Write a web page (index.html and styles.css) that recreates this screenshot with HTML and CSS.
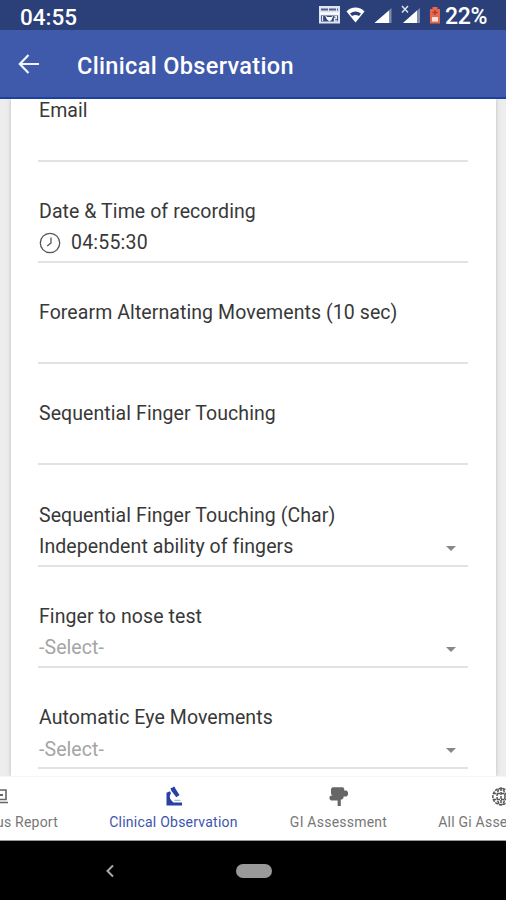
FILE: index.html
```html
<!DOCTYPE html>
<html lang="en">
<head>
<meta charset="utf-8">
<meta name="viewport" content="width=device-width">
<title>Clinical Observation</title>
<link rel="stylesheet" href="styles.css">
</head>
<body>
<div class="screen">
  <div class="status">
    <span class="clock">04:55</span>
    <svg class="status-icons" viewBox="0 0 128 30" width="128" height="30">
      <rect x="2" y="6" width="21" height="17.500" fill="#dfe4f1"/>
      <path d="M4 9.500h17" stroke="#4c5d8e" stroke-width="2" stroke-dasharray="7 1"/>
      <path d="M3 13.500h19" stroke="#fff" stroke-width="2"/>
      <path d="M4 15.500h17v6H4z" fill="#34477e"/>
      <path d="M5.500 16v5M17.500 16.500h2v2h-2v2.500h3" fill="none" stroke="#e8ecf6" stroke-width="1.300"/>
      <path d="M8 15.500l2.500 1.500h4l2-1.500-2 4.500-2 1.500-2.500-2z" fill="#fff"/>
      <path d="M29.500 11.500C34 6 43 6 47.500 11.500L38.500 22.500z" fill="#fff"/>
      <path d="M33 13.500q5.500-4 11 0l-2 2.500q-3.500-2-7 0z" fill="#2b3f78"/>
      <path d="M74.500 8v15h-17zM103 8v15H86z" fill="#7f8cae"/>
      <path d="M72 10.500V23H57.500zM100 10.500V23H86z" fill="#fff"/>
      <path d="M85 6l6 6.500M91 6l-6 6.500" stroke="#dce1ef" stroke-width="1.500"/>
      <path d="M115.500 7h5v2h2.500v14.500h-10V9h2.500z" fill="#e8684f"/>
      <path d="M115 17h6v4.500h-6z" fill="#f9e2dc"/>
      <path d="M118 10v5M115.500 12.500h5" stroke="#a53c32" stroke-width="1.300"/>
    </svg>
    <span class="percent">22%</span>
  </div>
  <header class="appbar">
    <svg class="back" viewBox="0 0 22 20" width="22" height="20"><path d="M21 10H2M10.500 1L1.800 10l8.700 9" fill="none" stroke="#f2f4fb" stroke-width="2.200"/></svg>
    <h1>Clinical Observation</h1>
  </header>
  <main class="content">
    <div class="card">
      <div class="field"><label>Email</label><div class="value"></div></div>
      <div class="field"><label>Date &amp; Time of recording</label><div class="value time"><svg viewBox="0 0 22 22" width="22" height="22"><circle cx="11" cy="11" r="9.700" fill="none" stroke="#555" stroke-width="1.300"/><path d="M12 5.500V11l-3.800 3" fill="none" stroke="#555" stroke-width="1.300"/></svg><span>04:55:30</span></div></div>
      <div class="field"><label>Forearm Alternating Movements (10 sec)</label><div class="value"></div></div>
      <div class="field"><label>Sequential Finger Touching</label><div class="value"></div></div>
      <div class="field"><label>Sequential Finger Touching (Char)</label><div class="value select"><span>Independent ability of fingers</span><i class="caret"></i></div></div>
      <div class="field"><label>Finger to nose test</label><div class="value select empty"><span>-Select-</span><i class="caret"></i></div></div>
      <div class="field"><label>Automatic Eye Movements</label><div class="value select empty"><span>-Select-</span><i class="caret"></i></div></div>
    </div>
  </main>
  <nav class="tabs">
    <div class="tab first">
      <svg viewBox="0 0 24 20" width="24" height="20"><path d="M5 3h15v9.500H5zM2 15.500h20" fill="none" stroke="#666" stroke-width="1.600"/><path d="M13 8h4" stroke="#666" stroke-width="2"/></svg>
      <span>Status Report</span>
    </div>
    <div class="tab active">
      <svg viewBox="0 0 20 20" width="20" height="20"><path d="M6.500 1l2-.3.800-1h1.400l.5 1.500 4.300 6.800-3.200 2.200-5-6.500z" fill="#2742a4"/><path d="M2.500 5.800L6 4.200l1 2Q4.500 9.500 7 13l2.500 2.500H18v3H2.500z" fill="#2742a4"/><path d="M10.500 13.300h6" stroke="#99a5d3"/></svg>
      <span>Clinical Observation</span>
    </div>
    <div class="tab">
      <svg viewBox="0 0 20 20" width="20" height="20"><path d="M3.500.3h10.500l1.200 1.200V3.500H17.500L19 5v3l-1.500 1.500H14.500v1.500l-1.500 1.500H11.800V19H8.600V13.500H2L.5 12V9.800L2 8.500h1.500L2 7V1.800z" fill="#666"/></svg>
      <span>GI Assessment</span>
    </div>
    <div class="tab last">
      <svg viewBox="0 0 20 20" width="20" height="20"><g fill="none" stroke="#555" stroke-width="1.500" stroke-dasharray="3 1"><circle cx="10" cy="9.500" r="8.200"/><ellipse cx="10" cy="9.500" rx="4" ry="8.200"/><path d="M10 1v17M2 6.500h16M2 12.500h16"/></g></svg>
      <span>All Gi Assessments</span>
    </div>
  </nav>
  <footer class="sysnav">
    <svg viewBox="0 0 8 14" width="8" height="14"><path d="M7 1.500L1.500 7 7 12.500" fill="none" stroke="#aaa" stroke-width="2"/></svg>
    <span class="pill"></span>
  </footer>
</div>
</body>
</html>
```

FILE: styles.css
```css
* { box-sizing: border-box; }
body { margin: 0; font-family: Roboto, "Liberation Sans", sans-serif; }
.screen { width: 506px; height: 900px; display: flex; flex-direction: column; overflow: hidden; background: #fff; }
.status { height: 30px; flex: none; background: #2b3f78; color: #fff; display: flex; align-items: center; padding: 4px 18px 0 20px; }
.clock, .percent { font-size: 23px; line-height: 26px; font-weight: 500; }
.clock { font-size: 22.500px; }
.status-icons { margin: -4px 0 0 auto; flex: none; }
.percent { width: 43px; white-space: nowrap; letter-spacing: -0.3px; }
.appbar { height: 69px; flex: none; background: #3f5aab; border-bottom: 2px solid #1d419d; display: flex; align-items: center; padding: 4px 0 0 18px; }
.back { margin-top: -4px; }
h1 { margin: 0 0 0 37px; font-size: 23.500px; line-height: 30px; font-weight: 500; color: #fff; white-space: nowrap; letter-spacing: 0.34px; }
.content { height: 677px; flex: none; background: #ededed; overflow: hidden; padding: 0 10px 0 11px; }
.card { height: 677px; background: #fff; box-shadow: 0 0 4px #bbb; padding: 0 28px 0 27px; display: flow-root; }
.field { height: 67px; margin-bottom: 34.300px; border-bottom: 2px solid #e2e2e2; color: #383838; font-size: 19.500px; letter-spacing: 0.08px; }
.field:first-child { margin-top: -4.500px; }
.field label { display: block; height: 31px; line-height: 31px; padding-left: 1px; white-space: nowrap; }
.value { height: 32px; display: flex; align-items: center; padding-left: 1px; white-space: nowrap; }
.time svg { margin-right: 10px; }
.time span { letter-spacing: 0.2px; }
.select { justify-content: space-between; padding-right: 12px; }
.empty { color: #a5a5a5; }
.caret { border: 5px solid transparent; border-top-color: #888; border-bottom: 0; margin-top: 3px; }
.tabs { height: 65px; flex: none; background: #fff; border-top: 1px solid #f4f4f4; border-bottom: 1px solid #999; display: flex; justify-content: flex-start; overflow: hidden; }
.tab { flex: none; width: 165px; display: flex; flex-direction: column; align-items: center; padding-top: 10px; color: #777; font-size: 14px; letter-spacing: 0.23px; white-space: nowrap; }
.tab svg { flex: none; overflow: visible; }
.tab span { line-height: 20px; margin-top: 5px; }
.first { margin-left: -74px; align-items: flex-end; }
.first svg { margin-right: 81px; }
.first span { margin-right: 33px; }
.last { width: 159px; }
.active { color: #3d54ad; }
.sysnav { height: 59px; background: #000; flex: none; display: flex; align-items: center; padding-left: 106px; gap: 122px; }
.pill { width: 36px; height: 14px; border-radius: 7px; background: #999; }
```
